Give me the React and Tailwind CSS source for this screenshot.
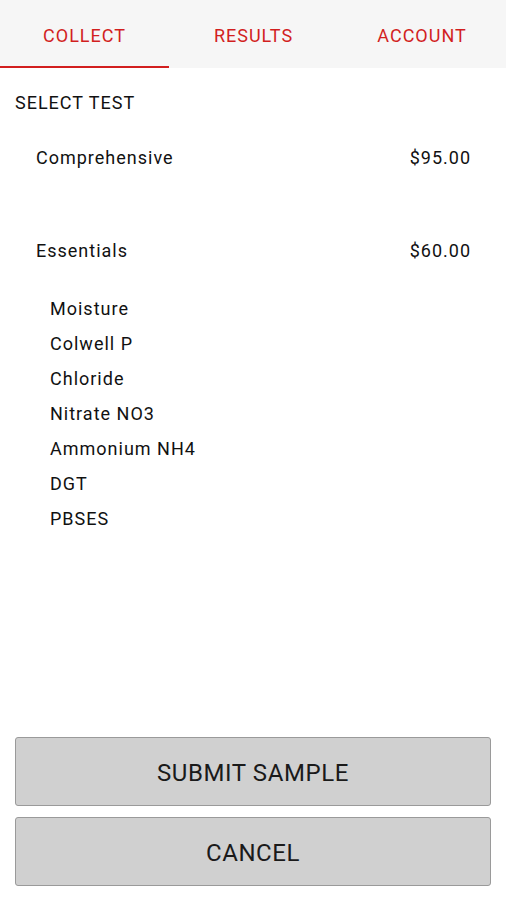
export default function App() {
  const items = ["Moisture", "Colwell P", "Chloride", "Nitrate NO3", "Ammonium NH4", "DGT", "PBSES"];
  return (
    <div className="flex h-[900px] w-[506px] flex-col bg-white font-['Roboto',sans-serif] tracking-[1px] text-[#111]">
      <div className="flex h-[68px] bg-[#f6f6f6]">
        <div className="flex w-[169px] flex-col">
          <div className="flex flex-1 items-center justify-center pt-[4px] text-[18px] text-[#d21f1f]">COLLECT</div>
          <div className="h-[2px] bg-[#d21f1f]"></div>
        </div>
        <div className="flex w-[169px] items-center justify-center pt-[2px] text-[18px] text-[#d21f1f]">RESULTS</div>
        <div className="flex w-[168px] items-center justify-center pt-[2px] text-[18px] text-[#d21f1f]">ACCOUNT</div>
      </div>
      <div className="pl-[15px] pt-[23px] text-[18px] leading-[24px]">SELECT TEST</div>
      <div className="flex justify-between pl-[36px] pr-[35px] pt-[31px] text-[18px] leading-[24px]">
        <span>Comprehensive</span>
        <span>$95.00</span>
      </div>
      <div className="flex justify-between pl-[36px] pr-[35px] pt-[69px] text-[18px] leading-[24px]">
        <span>Essentials</span>
        <span>$60.00</span>
      </div>
      <div className="flex flex-col gap-[11px] pl-[50px] pt-[34px] text-[18px] leading-[24px]">
        {items.map((t) => (
          <div key={t}>{t}</div>
        ))}
      </div>
      <div className="mt-auto flex flex-col gap-[11px] px-[15px] pb-[14px]">
        <button className="h-[69px] w-full rounded-[3px] border border-[#9a9a9a] bg-[#d0d0d0] pt-[3px] text-[24px] tracking-[0.6px] text-[#1a1a1a]">SUBMIT SAMPLE</button>
        <button className="h-[69px] w-full rounded-[3px] border border-[#9a9a9a] bg-[#d0d0d0] pt-[3px] text-[24px] tracking-[0.6px] text-[#1a1a1a]">CANCEL</button>
      </div>
    </div>
  );
}
